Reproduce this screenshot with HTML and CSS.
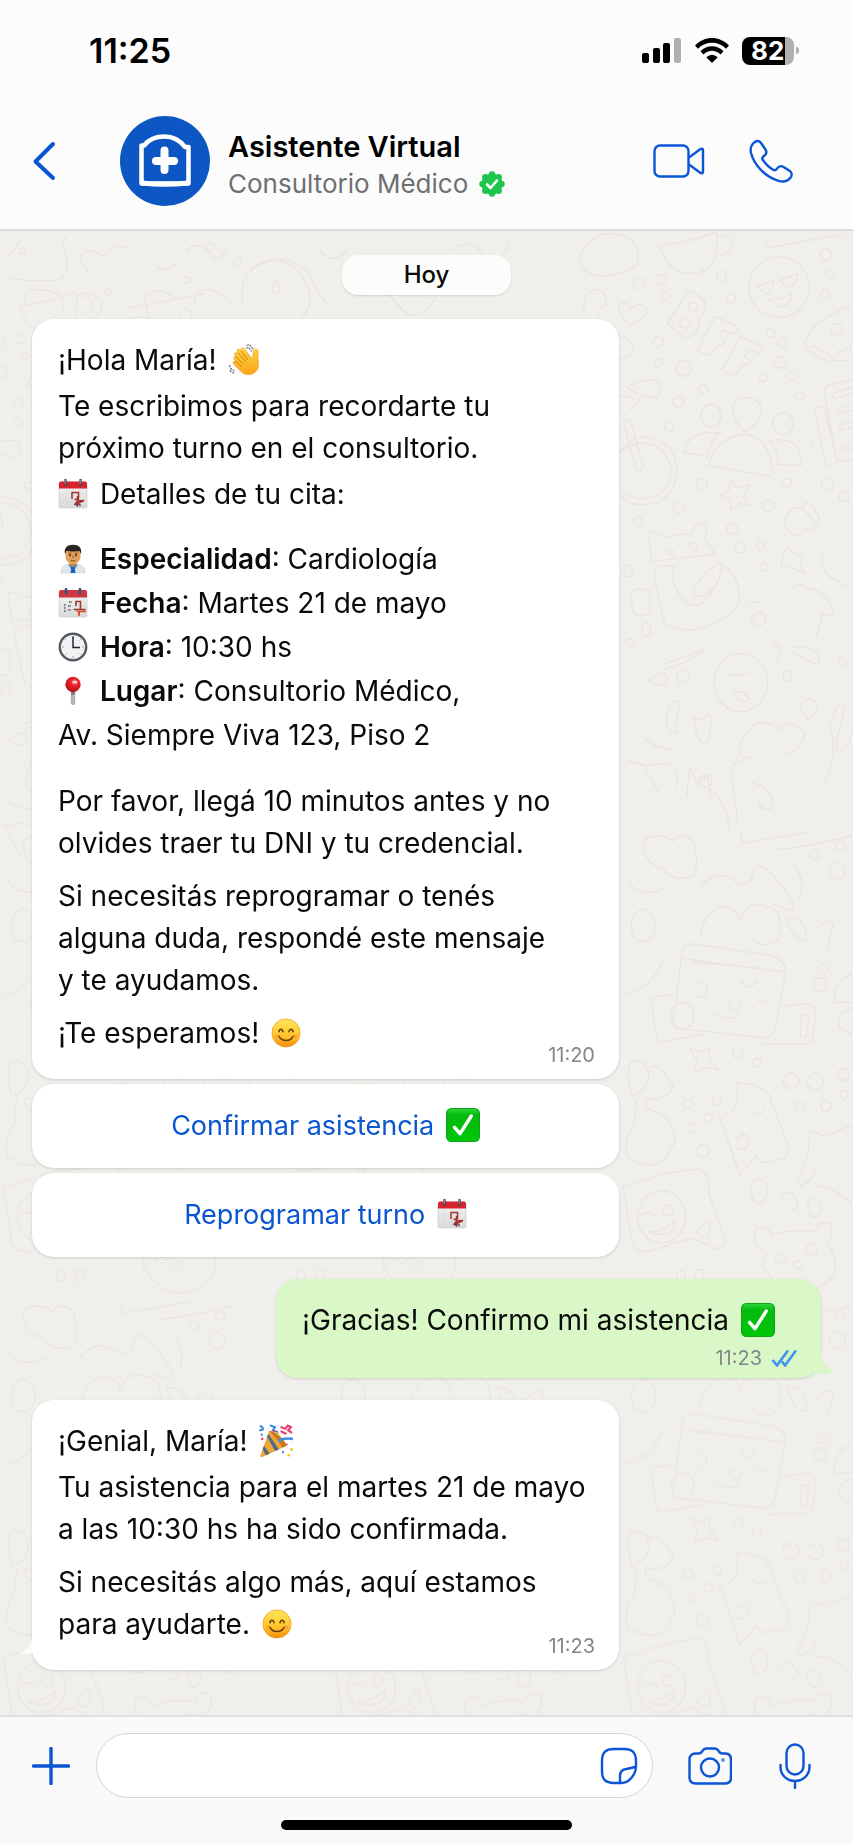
FILE: index.html
```html
<!DOCTYPE html>
<html lang="es">
<head>
    <meta charset="UTF-8">
    <meta name="viewport" content="width=device-width, initial-scale=1.0">
    <title>Asistente Virtual</title>
    <link rel="stylesheet" href="styles.css">
</head>
<body>
    <!-- Emojis e iconos reutilizables -->
    <svg class="sprite" aria-hidden="true">
        <defs>
            <linearGradient id="gSmile" x1="0" y1="0" x2="0" y2="1">
                <stop offset="0" stop-color="#ffe75a"/>
                <stop offset="0.6" stop-color="#ffc52c"/>
                <stop offset="1" stop-color="#f58a0c"/>
            </linearGradient>
            <linearGradient id="gCheck" x1="0" y1="0" x2="0" y2="1">
                <stop offset="0" stop-color="#2fd83a"/>
                <stop offset="0.2" stop-color="#05b90f"/>
                <stop offset="1" stop-color="#00c808"/>
            </linearGradient>
            <linearGradient id="gHand" x1="0" y1="0" x2="0" y2="1">
                <stop offset="0" stop-color="#ffd23e"/>
                <stop offset="1" stop-color="#f9a51c"/>
            </linearGradient>
            <radialGradient id="gPin" cx="0.6" cy="0.35" r="0.7">
                <stop offset="0" stop-color="#ff7a78"/>
                <stop offset="0.35" stop-color="#e8232c"/>
                <stop offset="1" stop-color="#b30d18"/>
            </radialGradient>
            <linearGradient id="gPage" x1="0" y1="0" x2="0" y2="1">
                <stop offset="0" stop-color="#f4f4f4"/>
                <stop offset="1" stop-color="#d9dadc"/>
            </linearGradient>
        </defs>
        <symbol id="e-smile" viewBox="0 0 32 32">
            <circle cx="16" cy="16" r="15" fill="url(#gSmile)" stroke="#f39a1d" stroke-width="0.8"/>
            <path d="M8.5 14.5c.6-3.4 3.6-3.4 4.2 0M19.3 14.5c.6-3.4 3.6-3.4 4.2 0" fill="none" stroke="#6b3f08" stroke-width="1.7" stroke-linecap="round"/>
            <path d="M8.5 19.5c3 6 12 6 15 0" fill="none" stroke="#6b3f08" stroke-width="1.7" stroke-linecap="round"/>
            <ellipse cx="6.8" cy="19.5" rx="2.6" ry="1.8" fill="#f7743a" opacity="0.4"/>
            <ellipse cx="25.2" cy="19.5" rx="2.6" ry="1.8" fill="#f7743a" opacity="0.4"/>
        </symbol>
        <symbol id="e-check" viewBox="0 0 32 32">
            <rect x="0.5" y="0.5" width="31" height="31" rx="4.5" fill="url(#gCheck)" stroke="#13a31b"/>
            <path d="M8 18.2l5.2 6L23.800 7.500" fill="none" stroke="#fff" stroke-width="3.2" stroke-linecap="round" stroke-linejoin="round"/>
        </symbol>
        <symbol id="e-wave" viewBox="0 0 34 34">
            <path d="M6.300 10.500c1-1.600 2.700-1.200 3.700.1l-1-2.200c-.4-2 2-3.300 3.500-1.500l.3-.4c.4-1.900 2.700-2.200 3.800-.6l6.500 8.600 1.300.6 1-7.300c.4-2.300 3.900-2.400 4.600-.2.500 1.600.2 4.400 0 8.600 1 4.800 1.200 9.500-2.600 12.900-4.500 3.900-10.500 3.200-14.200-.3L5.800 21.500c-1.900-1.900-.2-4.400 2.200-3.100L6.600 16.900c-1.900-2-.5-4.400 1.500-3.600l-1.300-1.200z" fill="url(#gHand)" stroke="#e9981a" stroke-width="0.5"/>
            <path d="M8 13.500l7 7.500M7.500 18.500l6 5.200M10.500 10.500l7 8M13.500 8l6 8.500" fill="none" stroke="#cf7f13" stroke-width="1" stroke-linecap="round"/>
            <path d="M18.500 2.500l3-1 3.800 4.800M17.800 5.300l2.800-1 3.200 4M1.500 22l1 3.300 4 3M1.800 27l1.500 2.300 2.800 1" fill="none" stroke="#6d7079" stroke-width="1.200" stroke-dasharray="2.500 0.800"/>
        </symbol>
        <symbol id="e-cal" viewBox="0 0 30 30">
            <rect x="1" y="3" width="28" height="26" rx="1.500" fill="url(#gPage)" stroke="#c9cacc" stroke-width="0.6"/>
            <path d="M1 9.500V4.500Q1 2.500 3 2.500H27Q29 2.500 29 4.500V9.500z" fill="#d8232f"/>
            <path d="M1 15h28M1 22h28M8 9.500V29M15 9.500V29M22 9.500V29" stroke="#cfd0d2" stroke-width="0.4"/>
            <path d="M7.500 1v5M22.500 1v5" stroke="#43484f" stroke-width="2.400" stroke-linecap="round"/>
            <path d="M7.200 1v4M22.200 1v4" stroke="#b9bdc2" stroke-width="0.800"/>
            <path d="M14 20v-6.500h6.500V20l-4 .5M19.500 17v9.500M16.500 26l3-4 6.500-.5-5.500 2.500 2 3" fill="none" stroke="#a6302d" stroke-width="1.500"/>
            <path d="M17.500 24.500l2.500 3" stroke="#454a50" stroke-width="1.500"/>
        </symbol>
        <symbol id="e-cal2" viewBox="0 0 30 30">
            <rect x="1" y="3" width="28" height="26" rx="1.500" fill="url(#gPage)" stroke="#c9cacc" stroke-width="0.6"/>
            <path d="M1 9.500V4Q1 2 3 2H27Q29 2 29 4V9.500z" fill="#d03540"/>
            <path d="M8 1v4.500M22 1v4.500" stroke="#2c5b7c" stroke-width="2.600" stroke-linecap="round"/>
            <path d="M11 14h3M6 17h2M10 18h3M6 20h2M6 23h2M10 22h3" stroke="#555a62" stroke-width="1.300" stroke-dasharray="1.600 0.700"/>
            <path d="M18 18v-4.500h4.500v8M15.500 21.500h12" fill="none" stroke="#9d3b33" stroke-width="1.600"/>
            <path d="M17 22.500h11v1.800h-6v3.400h-2v-3.400z" fill="#d9512f"/>
        </symbol>
        <symbol id="e-doctor" viewBox="0 0 30 32">
            <path d="M2 31c0-6 3-8.500 8-9.300h10c5 .8 8 3.300 8 9.300z" fill="#dfe6ee" stroke="#c3ccd6" stroke-width="0.5"/>
            <path d="M10 21.500l5 9.500 5-9.500z" fill="#2f8fd8"/>
            <path d="M13.500 24h3l1.200 7h-5.400z" fill="#1565b4"/>
            <path d="M11.500 18h7v4.500l-3.500 2.500-3.500-2.500z" fill="#c9823b"/>
            <path d="M7 9c0-6 16-6 16 0v4c0 5-4 8.500-8 8.500S7 18 7 13z" fill="#e2a25c"/>
            <path d="M6.500 11C5 4 9 .8 15 .8S25 4 23.500 11l-1.300-3.500c-4 .6-10.400.6-14.400 0z" fill="#2c2522"/>
            <circle cx="11.800" cy="12" r="1.100" fill="#3a2515"/>
            <circle cx="18.200" cy="12" r="1.100" fill="#3a2515"/>
            <path d="M10 9.800h3.500M16.500 9.800H20M12.500 17.500q2.500 1.300 5 0M15 12.500v2.300" fill="none" stroke="#70421c" stroke-width="0.900"/>
        </symbol>
        <symbol id="e-clock" viewBox="0 0 30 30">
            <circle cx="15" cy="15" r="13.200" fill="#f1f2f3" stroke="#565a60" stroke-width="2.400"/>
            <path d="M15 4v2M15 24v2M4 15h2M24 15h2M7.200 7.200l1.200 1.200M21.600 21.600l1.200 1.200M7.200 22.800l1.200-1.200M21.600 8.400l1.200-1.200" stroke="#9da1a6" stroke-width="1"/>
            <path d="M15 4.500V15.500H22" fill="none" stroke="#25282c" stroke-width="1.500"/>
        </symbol>
        <symbol id="e-pin" viewBox="0 0 30 32">
            <rect x="13.200" y="16" width="3.600" height="14.500" rx="1.800" fill="#b3b6ba" stroke="#85898e" stroke-width="0.600"/>
            <path d="M13 16h4v4h-4z" fill="#7b7f84"/>
            <circle cx="15" cy="9" r="8.200" fill="url(#gPin)"/>
            <ellipse cx="17" cy="6.500" rx="3" ry="1.800" fill="#fff" opacity="0.600"/>
        </symbol>
        <symbol id="e-party" viewBox="0 0 32 32">
            <path d="M9.500 6.500L1 30.500Q1.500 31.500 3 31L26 20.500C23 13 16 7 9.500 6.500z" fill="#f0a63a"/>
            <path d="M9.500 6.500C15 12 20 18 22 22.300l4-1.800C23 13 16 7 9.500 6.500z" fill="#c9771d"/>
            <path d="M7.600 12l7.500 13.500 3.600-1.600L9 9.500zM4.600 20.500l5.500 7.500-3.500 1.500L3.500 24z" fill="#4c6b86"/>
            <path d="M1.500 2l2 1.500M1 6l3-1M11 1.500l4 1.500-2 3 4 1.500" fill="none" stroke="#2f7fe0" stroke-width="1.800" stroke-linecap="round"/>
            <path d="M21 3l4 1.500 2-3 3 1.500-2.500 3 3 2M21 7l4 2" fill="none" stroke="#e63f6d" stroke-width="2" stroke-linecap="round"/>
            <path d="M19 15.500q5-2.500 12-1.500" fill="none" stroke="#3d8fe8" stroke-width="2.400" stroke-linecap="round"/>
            <g fill="#ef4b62"><circle cx="14" cy="6.500" r="1.200"/><circle cx="26" cy="19" r="1"/><circle cx="3" cy="14" r="1.200"/></g>
            <g fill="#f5b92c"><circle cx="30.500" cy="24" r="1.300"/><circle cx="28" cy="29.500" r="1.200"/><circle cx="18" cy="9.500" r="1.200"/></g>
            <g fill="#3478db"><circle cx="22.500" cy="26.500" r="1"/><circle cx="2.500" cy="10" r="1"/></g>
        </symbol>
    </svg>

    <header class="header">
        <div class="status-bar">
            <span class="status-time">11:25</span>
            <div class="status-icons">
                <svg width="40" height="25" viewBox="0 0 40 25">
                    <rect x="0" y="15" width="7" height="10" rx="2"/>
                    <rect x="11" y="10" width="7" height="15" rx="2"/>
                    <rect x="21" y="5" width="7" height="20" rx="2"/>
                    <rect x="32" y="0" width="7" height="25" rx="2" fill="#b0b0b0"/>
                </svg>
                <svg width="34" height="25" viewBox="0 0 34 25">
                    <path d="M0 7.500C9.500-2.500 24.500-2.500 34 7.500L31 10.700C23.200 2.800 10.800 2.800 3 10.700z"/>
                    <path d="M5.500 13.300C12 6.500 22 6.500 28.500 13.300L25.500 16.400C20.600 11.500 13.400 11.500 8.500 16.400z"/>
                    <path d="M11.300 19.200Q17 14.200 22.700 19.200L17 25z"/>
                </svg>
                <span class="battery"><span class="battery-body">82</span></span>
            </div>
        </div>
        <div class="contact-bar">
            <button class="icon-button back" aria-label="Volver">
                <svg width="24" height="40" viewBox="0 0 24 40"><path d="M21 3L3.500 20.500L21 37" stroke-width="4"/></svg>
            </button>
            <svg class="avatar" viewBox="0 0 90 90">
                <circle cx="45" cy="45" r="45" fill="#0d57c4"/>
                <path d="M21.500 29.500H24C29.500 22.500 37 20.500 44.500 20.500C54 20.500 60.500 25 65 31H68.500V67.500H21.500z" fill="none" stroke="#fff" stroke-width="4.500" stroke-linejoin="round"/>
                <path d="M22 67q22 2.500 46 0" fill="none" stroke="#fff" stroke-width="5"/>
                <path d="M44.500 34.500V54M36 45H54" fill="none" stroke="#fff" stroke-width="8" stroke-linecap="round"/>
            </svg>
            <div class="contact">
                <h1 class="contact-name">Asistente Virtual</h1>
                <p class="contact-sub">Consultorio Médico
                    <svg width="26" height="26" viewBox="0 0 26 26">
                        <g fill="#1fc64e">
                            <circle cx="13" cy="13" r="10.500"/>
                            <circle cx="13" cy="3.500" r="3.200"/><circle cx="19.700" cy="6.300" r="3.200"/><circle cx="22.500" cy="13" r="3.200"/><circle cx="19.700" cy="19.700" r="3.200"/>
                            <circle cx="13" cy="22.500" r="3.200"/><circle cx="6.300" cy="19.700" r="3.200"/><circle cx="3.500" cy="13" r="3.200"/><circle cx="6.300" cy="6.300" r="3.200"/>
                        </g>
                        <path d="M8 13.500l3.500 3.500L18 9.500" fill="none" stroke="#fff" stroke-width="2.600" stroke-linecap="round" stroke-linejoin="round"/>
                    </svg>
                </p>
            </div>
            <div class="call-actions">
                <button class="icon-button" aria-label="Videollamada">
                    <svg width="52" height="34" viewBox="0 0 52 34">
                        <rect x="1.500" y="1.500" width="34" height="31" rx="5.500"/>
                        <path d="M36 13.500L47.500 5Q50 4 50 6.500V27.500Q50 30 47.500 29L36 20.500"/>
                    </svg>
                </button>
                <button class="icon-button" aria-label="Llamar">
                    <svg width="44" height="44" viewBox="0 0 44 44">
                        <path d="M4 4.500C6.500 1.500 9.800 1 11.800 3.700L16.300 10.300C17.800 12.500 17.600 14.500 16 16L14 17.800C13 18.700 13 19.500 13.600 20.500C16.500 25 20.500 28.800 24.500 31C25.500 31.500 26.300 31.500 27 30.700L29 28.500C30.500 27 32.500 26.700 34.500 28L40.500 31.800C43.300 33.600 43.200 36.500 41.200 39C38.500 42.300 34.500 43.300 29.500 41.800C15.500 37.500 5 25.500 2 14C1.200 10.500 1.500 7.300 4 4.500z"/>
                    </svg>
                </button>
            </div>
        </div>
    </header>

    <main class="chat">
        <!-- Fondo con dibujos -->
        <svg class="doodles" viewBox="0 0 853 1484" preserveAspectRatio="xMaxYMin slice" aria-hidden="true">
            <g transform="translate(0 -1) scale(0.333)">
                <path d="M30 145q60 10 150 5 30-30 20-70-20-30 0-60M20 75q30-10 40-50M80 230q-20-60 50-50 60 0 60 60M240 190q40 0 60 20t-20 60M270 130q-40-40-20-60t60 10q30-50 80-20M730 230q-20-100 60-130t130 60q30 60-20 110M750 120q90-70 180 10 20 60 60 100M830 145q-20 40 0 45t0-45M430 190l20 80M440 200q40-40 90 10M470 110q30 20 60-10M560 60q40-30 70 10t50-20M580 230q10-60 50-50t60 40M960 60q40 50 80 0M1080 200q50-60 110 20t120-20M1350 60q60-40 100 10t80-30"/>
                <circle cx="68" cy="62" r="9"/><circle cx="632" cy="50" r="12"/><circle cx="714" cy="96" r="11"/><circle cx="325" cy="185" r="8"/><circle cx="560" cy="150" r="10"/><circle cx="1380" cy="150" r="13"/>
            </g>
            <g id="doodles-a" transform="translate(560 -1) scale(0.333 0.383)">
                <ellipse cx="658" cy="149" rx="91" ry="79"/>
                <path d="M592 148q25-5 50-18-2 32-22 37zM660 131q20-6 54-17-4 34-32 35zM626 182q40 0 70-17 2 30-36 37z"/>
                <path d="M300 40q80-5 170-35 10 90-50 105-90 20-120-70M60 70q40-80 130-55 60 20 40 75-20 20-100 32-70-5-70-52M474 14q45 0 44 25-10 30-46 25M620 25q-10 20 15 20l220-35"/>
                <path d="M72 215q-5-60 40-60 30 5 25 45-15-5-22 22M210 248q-50-40-25-58 20-5 25 18 25-25 50-3 10 20-50 43M322 245l62-85q60 15 53 45-5 18-20 20 5 50-40 58z"/>
                <path d="M412 315l55-90 62 25q5 15-8 22l-33-12-10 20 18 8q0 15-22 10l-25 30zM486 365l56-88 64 25q5 15-8 20l-33-10-10 20 18 8q0 15-22 10l-30 33z"/>
                <ellipse cx="400" cy="201" rx="14" ry="11"/><ellipse cx="375" cy="242" rx="16" ry="14"/>
                <path d="M735 295q20-60 140-97M735 295q10 20 20 10 10-10 22 10 20-5 30 10 20 20 30-10 20 5 38-15M755 312q0 35 120 27"/>
                <path d="M175 275q40 5 45 35 0 20-45 25M198 410q60-25 98-15 10 30-5 44-50-5-93-29M177 430l48 10M190 500l20-5 40 120q-10 25-22 5zM210 470l35-35"/>
                <path d="M177 580q30-35 70-40 100 5 105 90-10 90-110 88-40-2-65-30M177 585q20-25 65-30 85 5 92 75-10 70-90 72-40-5-67-25"/>
                <ellipse cx="453" cy="485" rx="30" ry="30"/><path d="M555 527q-45-40-35-70 15-22 45-20 35 5 40 30 0 35-50 60"/><ellipse cx="669" cy="506" rx="31" ry="29"/>
                <path d="M447 615q15-70 105-83 80 10 88 105-5 8-15 5zM372 580q15-60 108-50-30 25-38 62zM628 550q100-15 97 65l-70-3q0-45-27-62"/>
                <path d="M480 692l28-12 3-30 20 22 38-6-20 30 18 22-32-4-22 18-4-30zM765 470q20-20 30 0l38 130q-18 25-38 5zM879 390l-75 15q-12 5-10 20l38 180 47-5M879 410l-55 15q-15 10 0 15l55-15M879 455l-45 10q-10 10 5 15l40-10M879 500l-40 10q0 15 15 12l25-8M879 560l-30 8q0 10 30 5"/>
                <path d="M277 865l-14-70q10-15 50 8 40-8 85-10 10-35 35-25 15 5 0 40 20 15 33 38zM285 885q-10 0 30 145 90 30 150-5 90-30 70-90-10-50-70-70M285 885q30-15 60-5-15 30 5 60 50 80 110 0 20-20 25-60M400 945q20-50 82-75 5 60-55 85-20 5-27-10M210 950q15-20 60-8v60q-40 10-50-5z"/>
                <path d="M672 770q10-50 55-45l45 45q-20 20-40 10-20 40-60-10M725 725q20-25 30-5 25 20 22 40M662 875l18-50q20 25 50 25-15 30 10 50-40-20-78-25M790 850q-20 50 80 82M700 940q20-30 35-5 60 0 85 60-10 20-30 5l-20 60M697 1090q30-10 80 15v30q-40-10-80-35"/>
                <ellipse cx="543" cy="1182" rx="80" ry="76"/>
                <path d="M495 1165q30-10 45 0l-10-18M540 1165l30-15M520 1210q30-15 50 15-30 20-50-15M320 1275q10-60 40-40-15 45-10 75-30 10-30-35M540 1370q0-60 60-85 50 5 55 20 50-35 80 10-10 45-60 55M510 1410q20-30 75-35M515 1420l20 140M570 1440q80 20 65 70-30 10-40-20M820 1270q20-50 30-20M810 1290q30 90-25 165M879 1310q-40 90-50 30l30-110M205 1385q60 20 80 10 80-15 65 60M245 1390l55 85"/>
                <path d="M380 1480l10-75 22 40 30-20 10 55M255 1330q50 30 90 25M450 1460q50 30 60 108M310 1135l120-40M315 1145q60-10 115-45"/>
                <path d="M570 1020q20 30 50 0-10-30-25-20t-25 20M565 970q20 5 40 0M740 545q30 10 10 30M640 1090q20-20 20 10t-15 20M265 1180q30-30 50-20t-10 30zM350 1160q20-20 35-5t-30 30zM720 1250q20-40 45-20t-20 50zM400 1270q20 20 40 0t10 40-40 5z"/>
                <g>
                    <ellipse cx="237" cy="139" rx="17" ry="14"/><ellipse cx="303" cy="128" rx="16" ry="13"/><ellipse cx="314" cy="173" rx="12" ry="11"/><ellipse cx="485" cy="121" rx="15" ry="13"/><ellipse cx="515" cy="179" rx="13" ry="12"/>
                    <ellipse cx="798" cy="64" rx="17" ry="16"/><ellipse cx="811" cy="115" rx="12" ry="10"/><ellipse cx="795" cy="169" rx="13" ry="11"/><ellipse cx="295" cy="292" rx="17" ry="14"/><ellipse cx="633" cy="269" rx="13" ry="11"/>
                    <ellipse cx="668" cy="295" rx="14" ry="12"/><ellipse cx="660" cy="346" rx="19" ry="15"/><ellipse cx="371" cy="362" rx="23" ry="20"/><ellipse cx="296" cy="347" rx="13" ry="10"/><ellipse cx="611" cy="385" rx="12" ry="10"/>
                    <ellipse cx="696" cy="382" rx="13" ry="11"/><ellipse cx="431" cy="415" rx="14" ry="11"/><ellipse cx="720" cy="434" rx="14" ry="11"/><ellipse cx="355" cy="449" rx="17" ry="14"/><ellipse cx="328" cy="514" rx="14" ry="12"/>
                    <ellipse cx="830" cy="259" rx="18" ry="15"/><ellipse cx="425" cy="664" rx="17" ry="15"/><ellipse cx="681" cy="660" rx="14" ry="11"/><ellipse cx="803" cy="664" rx="19" ry="16"/><ellipse cx="852" cy="696" rx="15" ry="13"/>
                    <ellipse cx="357" cy="725" rx="17" ry="14"/><ellipse cx="235" cy="759" rx="13" ry="11"/><ellipse cx="625" cy="720" rx="18" ry="15"/><ellipse cx="517" cy="780" rx="17" ry="14"/><ellipse cx="540" cy="829" rx="17" ry="14"/>
                    <ellipse cx="601" cy="822" rx="12" ry="11"/><ellipse cx="612" cy="881" rx="13" ry="11"/><ellipse cx="202" cy="891" rx="17" ry="15"/><ellipse cx="401" cy="827" rx="12" ry="10"/><ellipse cx="333" cy="842" rx="9" ry="7"/>
                    <ellipse cx="259" cy="1044" rx="14" ry="18"/><ellipse cx="211" cy="1078" rx="14" ry="10"/><ellipse cx="848" cy="1128" rx="12" ry="11"/><ellipse cx="683" cy="1164" rx="13" ry="14"/><ellipse cx="438" cy="1438" rx="19" ry="17"/>
                </g>
            </g>
            <g id="doodles-b" transform="translate(560 599) scale(0.333 0.383)">
                <path d="M340 500l28-190q10-15 40-12l230 30q45 15 38 50l-32 145q-10 20-35 20L430 525l-60-5q-30 0-30-20M365 335l250 30 60 5M340 430l-55 5q-15 5-10 20l15 85q0 15 20 13l120-20M395 345l200 15M675 460l70-8q30 10 22 40l-10 60q-10 10-25 5l-120 2M725 485q15-5 22 0l-8 55h-18z"/>
                <path d="M390 570l35 10 25-12-2 30 28 28-40-5-32 12 8-30zM215 690q-20-70 0-85 40-10 50 30 5 40-50 62M260 630q30-40 80 40-20 40-80 30M230 700l-5 60q-40 60-20 95 70 40 115 0l25-40q0-60-60-80-30 0-30-35M480 750q60-20 50-50 10-40-5-40 100 0 110 50l45 100q20 40-20 50-60 20-70-10l-50 50zM190 930q30 0 80-20 60-20 155-25 30 30 20 60l40 100q20 40-10 50l-80-30q-70 20-130 35-40 5-50-25z"/>
                <ellipse cx="305" cy="1010" rx="72" ry="68"/>
                <path d="M245 1005q20-15 45 5M265 1050q40 0 80-30 0 50-80 30M750 785l45 15q50-20 84-30M750 790q-5 80-25 100-20 30 0 40 40-20 40-40M765 930q60 0 114 50M610 1140q0-30 10-35-50-20-30-65 40-10 45 20 60-20 130-12 10-30 45-20 15 30-10 50 60 70-10 110-100 60-180-48"/>
                <ellipse cx="665" cy="1118" rx="18" ry="12"/><ellipse cx="755" cy="1095" rx="17" ry="14"/><ellipse cx="714" cy="1135" rx="14" ry="9"/>
                <path d="M540 5l10 30 200-30M650 50q60 0 229-35M250 30q40-30 90 0 20-30 60 0 20 60 0 90-60 20-90-20-60-10-60-70M420 280q10-60 60-80 60 0 60 40 20-60 80-40 50 0 40 80-40 40-90 0M205 130q20 40 80 30l40-10M220 280q-20-60 30-75 50 20 30 70-30 30-60 5M190 430q80-10 120-90M879 375q-60 20-55 75h55M879 470q-50 0-40 45l40 20"/>
                <path d="M420 150q50-50 100-20t60-20 90 40-40 40M700 90q40 40 20 90M680 230q60-10 60 60-40 0-60-60M770 260q40-40 50-10l-20 60M415 400q30-10 25 20t-30 10M540 390q30 40 50 0M460 480q40 20 80 5M590 440q20 20 35 0M530 810q30-30 35 0t-35 20M580 730q20 20 35 0M430 1030q20-30 20 10t-40 10zM660 960q20-30 45 0t-15 30M350 1160q20-20 25 0t-25 15zM410 1150q30-10 20 20t-25 0z"/>
                <ellipse cx="764" cy="66" rx="15" ry="12"/><ellipse cx="841" cy="41" rx="14" ry="12"/><ellipse cx="833" cy="106" rx="24" ry="22"/><ellipse cx="534" cy="582" rx="16" ry="13"/><ellipse cx="591" cy="607" rx="13" ry="11"/>
                <ellipse cx="694" cy="655" rx="24" ry="20"/><ellipse cx="767" cy="657" rx="25" ry="21"/><ellipse cx="851" cy="638" rx="17" ry="16"/><ellipse cx="853" cy="691" rx="12" ry="11"/><ellipse cx="798" cy="721" rx="15" ry="15"/>
                <ellipse cx="720" cy="724" rx="14" ry="13"/><ellipse cx="385" cy="715" rx="15" ry="12"/><ellipse cx="471" cy="706" rx="14" ry="12"/><ellipse cx="445" cy="751" rx="13" ry="11"/><ellipse cx="397" cy="778" rx="13" ry="11"/>
                <ellipse cx="428" cy="838" rx="19" ry="16"/><ellipse cx="323" cy="993" rx="16" ry="15"/><ellipse cx="791" cy="362" rx="13" ry="12"/><ellipse cx="782" cy="403" rx="20" ry="18"/><ellipse cx="526" cy="456" rx="17" ry="13"/>
                <ellipse cx="368" cy="485" rx="34" ry="35"/><ellipse cx="598" cy="943" rx="24" ry="32"/><ellipse cx="763" cy="986" rx="20" ry="24"/>
            </g>
            <!-- Repeticiones para la izquierda y la parte baja -->
            <g opacity="0.8">
                <use href="#doodles-b" x="0" y="470"/>
                <use href="#doodles-b" x="-290" y="470"/>
                <use href="#doodles-b" x="-620" y="470"/>
                <use href="#doodles-b" x="-620" y="0"/>
                <use href="#doodles-b" x="-380" y="0"/>
                <use href="#doodles-a" x="-640" y="60"/>
            </g>
        </svg>

        <div class="day">Hoy</div>

        <div class="message">
            <article class="bubble">
                <p>¡Hola María! <svg class="emoji large"><use href="#e-wave"/></svg></p>
                <p>Te escribimos para recordarte tu<br>próximo turno en el consultorio.</p>
                <p><svg class="emoji lead"><use href="#e-cal"/></svg> Detalles de tu cita:</p>
                <ul class="details">
                    <li><svg class="emoji lead"><use href="#e-doctor"/></svg> <b>Especialidad</b>: Cardiología</li>
                    <li><svg class="emoji lead"><use href="#e-cal2"/></svg> <b>Fecha</b>: Martes 21 de mayo</li>
                    <li><svg class="emoji lead"><use href="#e-clock"/></svg> <b>Hora</b>: 10:30 hs</li>
                    <li><svg class="emoji lead"><use href="#e-pin"/></svg> <b>Lugar</b>: Consultorio Médico,<br>Av. Siempre Viva 123, Piso 2</li>
                </ul>
                <p>Por favor, llegá 10 minutos antes y no<br>olvides traer tu DNI y tu credencial.</p>
                <p class="spaced">Si necesitás reprogramar o tenés<br>alguna duda, respondé este mensaje<br>y te ayudamos.</p>
                <div class="last-line spaced">
                    <p>¡Te esperamos! <svg class="emoji"><use href="#e-smile"/></svg></p>
                    <time class="time">11:20</time>
                </div>
            </article>
            <button class="reply">Confirmar asistencia <svg class="emoji large"><use href="#e-check"/></svg></button>
            <button class="reply">Reprogramar turno <svg class="emoji"><use href="#e-cal"/></svg></button>
        </div>

        <article class="bubble sent">
            <p>¡Gracias! Confirmo mi asistencia <svg class="emoji large"><use href="#e-check"/></svg></p>
            <div class="receipt">
                <time class="time">11:23</time>
                <svg width="26" height="18" viewBox="0 0 26 18">
                    <path d="M1.500 11l4.500 5.500L17 1.500M11 12.500l3 4L25 1.500" fill="none" stroke="#3b97ea" stroke-width="2.600"/>
                </svg>
            </div>
            <svg class="tail" width="20" height="26" viewBox="0 0 20 26"><path d="M0 0H7C8 10 12 15 20 18C14 22 8 22 3 20L0 26z" fill="#daf8c7"/></svg>
        </article>

        <article class="bubble">
            <p>¡Genial, María! <svg class="emoji large"><use href="#e-party"/></svg></p>
            <p>Tu asistencia para el martes 21 de mayo<br>a las 10:30 hs ha sido confirmada.</p>
            <div class="last-line spaced">
                <p>Si necesitás algo más, aquí estamos<br>para ayudarte. <svg class="emoji"><use href="#e-smile"/></svg></p>
                <time class="time">11:23</time>
            </div>
            <svg class="tail" width="20" height="26" viewBox="0 0 20 26"><path d="M20 0H12C11 7 6 13 0 15C4 17 9 16 13 15L20 20z" fill="#fff" opacity="0.800"/></svg>
        </article>
    </main>

    <footer class="composer">
        <div class="composer-row">
            <button class="icon-button" aria-label="Adjuntar">
                <svg width="38" height="38" viewBox="0 0 38 38"><path d="M19 1.500V36.500M1.500 19H36.500" stroke-width="3.400"/></svg>
            </button>
            <div class="field">
                <input class="field-input" type="text" aria-label="Mensaje">
                <button class="icon-button" aria-label="Stickers">
                    <svg width="38" height="38" viewBox="0 0 38 38">
                        <path d="M21.500 36H14C5.500 36 2 32.500 2 24V14C2 5.500 5.500 2 14 2H24C32.500 2 36 5.500 36 14V19C36 27 29.500 36 21.500 36zM20 35.500V29C20 24.500 22 22.500 26.500 22L35 20"/>
                    </svg>
                </button>
            </div>
            <button class="icon-button" aria-label="Cámara">
                <svg width="44" height="38" viewBox="0 0 44 38">
                    <path d="M7.500 6.500H10.500C12.500 6.500 13.500 5.500 14.500 3.800C15.500 2.200 16.300 1.500 18 1.500H27C28.700 1.500 29.500 2.200 30.500 3.800C31.500 5.500 32.500 6.500 34.500 6.500H37C40.800 6.500 43 8.800 43 12.500V30.500C43 34.200 40.800 36.500 37 36.500H7.500C3.700 36.500 1.500 34.200 1.500 30.500V12.500C1.500 8.800 3.700 6.500 7.500 6.500z"/>
                    <circle cx="22" cy="20.500" r="9"/>
                    <circle cx="35" cy="13" r="0.500"/>
                </svg>
            </button>
            <button class="icon-button" aria-label="Grabar audio">
                <svg width="32" height="46" viewBox="0 0 32 46">
                    <rect x="7.500" y="1.500" width="17" height="30" rx="8.500"/>
                    <path d="M1.500 22V24C1.500 32 8 38 16 38S30.500 32 30.500 24V22M16 38V45"/>
                </svg>
            </button>
        </div>
        <div class="home-indicator"></div>
    </footer>
</body>
</html>
```
FILE: styles.css
```css
* {
    box-sizing: border-box;
}

body {
    margin: 0;
    min-height: 100vh;
    display: flex;
    flex-direction: column;
    font-family: Inter, 'Liberation Sans', sans-serif;
    font-size: 28px;
    line-height: 42px;
    color: #0a0a0a;
    background-color: #f1efeb;
}

p, h1, ul {
    margin: 0;
    padding: 0;
}

.sprite {
    position: absolute;
    width: 0;
    height: 0;
}

/* Cabecera */
.header {
    background-color: #fcfcfc;
    border-bottom: 2px solid #dcdcdc;
}

.status-bar {
    display: flex;
    justify-content: space-between;
    align-items: center;
    height: 101px;
    padding: 0 54px 0 89px;
}

.status-time {
    font-size: 34px;
    font-weight: 600;
    color: #000;
}

.status-icons {
    display: flex;
    align-items: center;
    gap: 13px;
}

.battery {
    display: flex;
    align-items: center;
    gap: 2px;
}

.battery::after {
    content: "";
    width: 3px;
    height: 7px;
    border-radius: 0 3px 3px 0;
    background-color: #b0b0b0;
}

.battery-body {
    width: 52px;
    height: 28px;
    padding-left: 9px;
    border-radius: 8px;
    background: linear-gradient(to right, #000 82%, #b0b0b0 82%);
    color: #fff;
    font-size: 26px;
    font-weight: 700;
    line-height: 28px;
}

.contact-bar {
    display: flex;
    align-items: center;
    height: 128px;
    padding: 0 60px 8px 32px;
}

.icon-button {
    display: flex;
    padding: 0;
    border: none;
    background: none;
    cursor: pointer;
}

.icon-button svg {
    fill: none;
    stroke: #0a55d6;
    stroke-width: 2.4;
    stroke-linecap: round;
    stroke-linejoin: round;
}

.back {
    margin-right: 64px;
}

.avatar {
    width: 90px;
    height: 90px;
    margin-right: 18px;
}

.contact {
    flex: 1;
    padding-top: 8px;
}

.contact-name {
    font-size: 29px;
    font-weight: 600;
    line-height: 38px;
    color: #000;
}

.contact-sub {
    display: flex;
    align-items: center;
    gap: 11px;
    font-size: 26px;
    line-height: 36px;
    color: #6e6f73;
}

.call-actions {
    display: flex;
    align-items: center;
    gap: 44px;
}

/* Conversación */
.chat {
    position: relative;
    flex: 1;
    display: flex;
    flex-direction: column;
    gap: 22px;
    padding: 24px 32px 44px;
}

.chat > * {
    position: relative;
}

.chat > .doodles {
    position: absolute;
    top: 0;
    left: 0;
    width: 100%;
    height: 100%;
    fill: none;
    stroke: #e9e4df;
    stroke-width: 1.3;
}

.doodles path,
.doodles ellipse,
.doodles circle {
    vector-effect: non-scaling-stroke;
}

.day {
    align-self: center;
    width: 169px;
    margin-bottom: 2px;
    border-radius: 16px;
    background-color: #fcfcfb;
    box-shadow: 0 1px 2px rgba(0, 0, 0, 0.12);
    font-size: 24px;
    font-weight: 500;
    line-height: 40px;
    text-align: center;
}

.message {
    display: flex;
    flex-direction: column;
    gap: 5px;
    width: 100%;
    max-width: 587px;
}

.bubble {
    width: 100%;
    max-width: 587px;
    padding: 20px 24px 12px 26px;
    border-radius: 22px;
    background-color: #fff;
    box-shadow: 0 1px 3px rgba(0, 0, 0, 0.14);
}

.bubble p + p {
    margin-top: 4px;
}

.bubble .spaced {
    margin-top: 11px;
}

.details {
    margin: 22px 0 23px;
    list-style: none;
    line-height: 44px;
}

.details b {
    font-weight: 600;
}

.emoji {
    width: 30px;
    height: 30px;
    margin-left: 4px;
    vertical-align: -5px;
}

.emoji.large {
    width: 34px;
    height: 34px;
    vertical-align: -7px;
}

.emoji.lead {
    margin: 0 4px 0 0;
}

.last-line {
    display: flex;
    justify-content: space-between;
    align-items: flex-end;
}

.last-line p {
    margin-bottom: 13px;
}

.time {
    font-size: 20px;
    line-height: 24px;
    color: #85868a;
}

.reply {
    height: 84px;
    border: none;
    border-radius: 22px;
    background-color: #fff;
    box-shadow: 0 1px 3px rgba(0, 0, 0, 0.14);
    font: inherit;
    font-size: 27px;
    color: #0a55d0;
    cursor: pointer;
}

.sent {
    align-self: flex-end;
    max-width: 545px;
    padding-bottom: 8px;
    background-color: #daf8c7;
}

.receipt {
    display: flex;
    justify-content: flex-end;
    align-items: center;
    gap: 9px;
    margin-top: 5px;
}

.tail {
    position: absolute;
    left: -12px;
    bottom: 6px;
}

.sent .tail {
    left: auto;
    right: -13px;
    bottom: -1px;
}

/* Barra de escritura */
.composer {
    padding: 16px 32px 14px;
    border-top: 2px solid #dfdfdf;
    background-color: #f9f9f9;
}

.composer-row {
    display: flex;
    align-items: center;
    gap: 35px;
}

.field {
    flex: 1;
    display: flex;
    align-items: center;
    min-width: 0;
    height: 65px;
    margin-left: -9px;
    padding: 0 14px 0 28px;
    border: 1px solid #d6d6d6;
    border-radius: 33px;
    background-color: #fff;
}

.field-input {
    flex: 1;
    min-width: 0;
    padding: 0;
    border: none;
    outline: none;
    background: none;
    font: inherit;
}

.field .icon-button {
    margin: 0;
}

.composer-row > .icon-button:last-child {
    margin: 0 10px 0 12px;
}

.home-indicator {
    width: 291px;
    height: 10px;
    margin: 22px auto 0;
    border-radius: 5px;
    background-color: #000;
}
```
